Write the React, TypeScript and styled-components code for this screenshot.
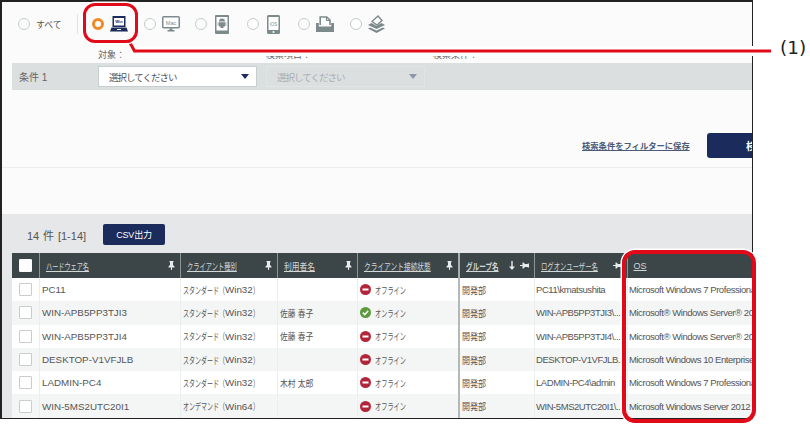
import React from 'react';
import styled, { createGlobalStyle } from 'styled-components';

const NAVY = '#1a2b5c';
const ICON_GREY = '#7d8a8c';
const RED = '#e00a18';
const COLUMNS = '27px 141px 97px 80px 101px 76px 93px 140px';
const FONT = `"Liberation Sans", "Noto Sans CJK JP", sans-serif`;

const GlobalStyle = createGlobalStyle`
  html, body {
    margin: 0;
    padding: 0;
    background: #fff;
    font-family: ${FONT};
  }
`;

const Page = styled.div`
  position: relative;
  width: 810px;
  height: 426px;
  overflow: hidden;
  background: #fff;
`;

const Frame = styled.div`
  width: 753px;
  height: 419px;
  box-sizing: border-box;
  border: 1px solid #222;
  border-top-width: 2px;
  border-left-width: 2px;
  overflow: hidden;
  display: flex;
  flex-direction: column;
  background: #e6e7e8;
`;

const SearchPanel = styled.section`
  height: 212px;
  flex: none;
  background: #fbfbfb;
  display: flex;
  flex-direction: column;
`;

const RadioRow = styled.div`
  height: 44px;
  flex: none;
  padding-left: 16px;
  display: flex;
  align-items: center;
`;

const AllOption = styled.label`
  display: flex;
  align-items: center;
  gap: 6px;
  font-size: 8.8px;
  color: #555;
  width: 59px;
`;

const Divider = styled.span`
  width: 1px;
  height: 20px;
  background: #e2e4e4;
  margin-right: 14px;
`;

const DeviceOption = styled.label`
  width: 51.6px;
  display: flex;
  align-items: center;
  gap: 6px;
`;

const IconSlot = styled.span`
  width: 18px;
  display: flex;
  justify-content: center;
`;

const Radio = styled.span<{ $checked?: boolean }>`
  width: 12px;
  height: 12px;
  flex: none;
  box-sizing: border-box;
  border-radius: 50%;
  background: ${p => (p.$checked ? '#fff' : '#fdfdfd')};
  border: ${p => (p.$checked ? '3.5px solid #f08a24' : '1px solid #c4cccc')};
`;

const LabelRow = styled.div`
  height: 17px;
  flex: none;
  padding: 2px 0 0 96px;
  box-sizing: border-box;
  display: grid;
  grid-template-columns: 168px 167px 1fr;
  font-size: 9px;
  color: #666;
`;

const ConditionBand = styled.div`
  height: 27px;
  flex: none;
  margin-left: 10px;
  padding-left: 7px;
  background: #dcdfe0;
  display: flex;
  align-items: center;
`;

const ConditionLabel = styled.span`
  width: 79px;
  font-size: 10px;
  color: #666;
`;

const Select = styled.div<{ $disabled?: boolean }>`
  width: 159px;
  height: 21px;
  box-sizing: border-box;
  margin-right: 9px;
  padding: 0 7px 0 10px;
  display: flex;
  align-items: center;
  justify-content: space-between;
  font-size: 9.5px;
  letter-spacing: -1px;
  background: ${p => (p.$disabled ? '#dcdfe0' : '#fff')};
  border: 1px solid ${p => (p.$disabled ? '#e2e5e5' : '#c6ced0')};
  color: ${p => (p.$disabled ? '#a9aeb0' : '#555')};
`;

const Caret = styled.span<{ $disabled?: boolean }>`
  width: 0;
  height: 0;
  border-left: 4px solid transparent;
  border-right: 4px solid transparent;
  border-top: 5px solid ${p => (p.$disabled ? '#8c96a8' : NAVY)};
`;

const ActionRow = styled.div`
  height: 78px;
  flex: none;
  box-sizing: border-box;
  padding: 43px 0 0 580px;
  display: flex;
  align-items: flex-start;
  border-bottom: 1px solid #eeeeee;
`;

const SaveLink = styled.a`
  flex: none;
  width: 125px;
  margin-top: 6px;
  font-size: 8.3px;
  font-weight: 700;
  color: #4a5a78;
  text-decoration: underline;
  white-space: nowrap;
`;

const SearchButton = styled.button`
  flex: none;
  width: 85px;
  height: 25px;
  padding: 0 0 0 39px;
  border: none;
  border-radius: 3px;
  background: ${NAVY};
  color: #fff;
  font-family: ${FONT};
  font-size: 10.5px;
  font-weight: 700;
  text-align: left;
`;

const ResultBar = styled.div`
  height: 39px;
  flex: none;
  box-sizing: border-box;
  padding: 2px 0 0 25px;
  display: flex;
  align-items: center;
  gap: 16px;
`;

const ResultCount = styled.span`
  width: 60px;
  font-size: 11px;
  color: #555;
  white-space: nowrap;
  word-spacing: 0.8px;
`;

const CsvButton = styled.button`
  width: 62px;
  height: 21px;
  padding: 0;
  border: none;
  border-radius: 2px;
  background: ${NAVY};
  color: #fff;
  font-family: ${FONT};
  font-size: 9px;
  letter-spacing: -0.2px;
`;

const Table = styled.div`
  margin-left: 10px;
  width: 760px;
`;

const HeaderRow = styled.div`
  display: grid;
  grid-template-columns: ${COLUMNS};
  height: 25px;
  background: #3c4548;
`;

const HeaderCell = styled.div<{ $pinEnd?: boolean }>`
  display: flex;
  align-items: center;
  justify-content: space-between;
  padding: 0 5px 0 5.5px;
  font-size: 9px;
  color: #d3d8d8;
  border-left: ${p => (p.$pinEnd ? '2px solid #a8adae' : '1px solid #8d9496')};
`;

// Reference type is a condensed face: squeeze the glyphs to the measured width
const Condensed = styled.span<{ $chars: number; $width: number }>`
  display: inline-block;
  flex: none;
  white-space: nowrap;
  font-size: 9.5px;
  width: ${p => p.$chars * 9.5}px;
  margin-right: ${p => p.$width - p.$chars * 9.5}px;
  transform: scaleX(${p => p.$width / (p.$chars * 9.5)});
  transform-origin: left center;
`;

const HeaderTitle = styled(Condensed)`
  text-decoration: underline;
`;

const HeaderIcons = styled.span`
  display: flex;
  align-items: center;
  gap: 5px;
`;

const CheckCell = styled.div`
  display: flex;
  align-items: center;
  justify-content: center;
`;

const Check = styled.span<{ $header?: boolean }>`
  width: 11px;
  height: 11px;
  border: 1px solid ${p => (p.$header ? '#fff' : '#c9cccc')};
  border-radius: 1px;
  background: #fff;
`;

const Row = styled.div<{ $shaded: boolean }>`
  display: grid;
  grid-template-columns: ${COLUMNS};
  height: 23.3px;
  background: ${p => (p.$shaded ? '#f4f5f5' : '#fff')};
`;

const Cell = styled.div<{ $pinEnd?: boolean }>`
  display: flex;
  align-items: center;
  gap: 4px;
  padding-left: 2px;
  overflow: hidden;
  white-space: nowrap;
  font-size: 9.8px;
  color: #555;
  border-left: ${p => (p.$pinEnd ? '2px solid #b4b8b9' : '1px solid #eceeee')};
`;

const ClientCell = styled(Cell)`
  gap: 0;
`;

const NarrowCell = styled(Cell)`
  padding-left: 1px;
  font-size: 9.5px;
  letter-spacing: -0.45px;
`;

const CalloutBox = styled.div`
  position: absolute;
  box-sizing: border-box;
  border: 3.5px solid ${RED};
  box-shadow: 0 0 0 1.5px #fff;
`;

const DeviceBox = styled(CalloutBox)`
  left: 83px;
  top: 3px;
  width: 55px;
  height: 40px;
  border-radius: 12px;
`;

const OsBox = styled(CalloutBox)`
  left: 622px;
  top: 250px;
  width: 134px;
  height: 173px;
  border-width: 4.5px;
  border-radius: 13px;
`;

const CalloutLine = styled.svg`
  position: absolute;
  left: 0;
  top: 0;
`;

const CalloutNumber = styled.span`
  position: absolute;
  left: 780px;
  top: 37px;
  font-family: "DejaVu Sans", sans-serif;
  font-size: 18.5px;
  color: #222;
`;

const LaptopIcon = () => (
  <svg width="18" height="16" viewBox="0 0 18 16">
    <path d="M2.500 0h13v11h-13z" fill={NAVY} />
    <path d="M4 2h10v7.500H4z" fill="#fff" />
    <text x="9" y="7" fontSize="4" fontFamily="Liberation Sans" fontWeight="700" textAnchor="middle" fill={NAVY}>Win</text>
    <path d="M1.500 11.500h15L18 15.500H0z" fill={NAVY} />
    <path d="M7 13h4v1H7z" fill="#fff" />
  </svg>
);

const MacIcon = () => (
  <svg width="18" height="16" viewBox="0 0 18 16">
    <rect x="0.750" y="0.750" width="16.500" height="11" rx="1" fill="#fff" stroke={ICON_GREY} strokeWidth="1.500" />
    <text x="9" y="8.500" fontSize="5.500" fontFamily="Liberation Sans" textAnchor="middle" fill={ICON_GREY}>Mac</text>
    <path d="M7.500 12.500h3V14h2v1.500h-7V14h2z" fill={ICON_GREY} />
  </svg>
);

const AndroidIcon = () => (
  <svg width="14" height="19" viewBox="0 0 14 19">
    <rect x="0" y="0" width="14" height="19" rx="1" fill={ICON_GREY} />
    <rect x="1.500" y="2" width="11" height="13.500" fill="#fff" />
    <path d="M4 6.500a3 3 0 0 1 6 0zM4 7.300h6v4.200H8.500V13h-3v-1.500H4z" fill={ICON_GREY} />
    <path d="M2.700 7.300h.8v3.500h-.8zM10.500 7.300h.8v3.500h-.8z" fill={ICON_GREY} />
  </svg>
);

const IosIcon = () => (
  <svg width="13" height="19" viewBox="0 0 13 19">
    <rect x="0" y="0" width="13" height="19" rx="1.500" fill={ICON_GREY} />
    <rect x="1.500" y="2" width="10" height="13" fill="#fff" />
    <text x="6.500" y="10.500" fontSize="4.500" fontFamily="Liberation Sans" textAnchor="middle" fill={ICON_GREY}>iOS</text>
    <circle cx="6.500" cy="17" r="1" fill="#fff" />
  </svg>
);

const TrayIcon = () => (
  <svg width="18" height="16" viewBox="0 0 18 16">
    <path d="M4.200 9V1h6.500L14 4.200V9" fill="#fff" stroke={ICON_GREY} strokeWidth="1.600" />
    <path d="M10.500 1v3.500H14" fill="none" stroke={ICON_GREY} strokeWidth="1.200" />
    <path d="M0 7h2.800v3.500h12.400V7H18v9H0z" fill={ICON_GREY} />
  </svg>
);

const StackIcon = () => (
  <svg width="17" height="18" viewBox="0 0 17 18">
    <path d="M4 6.500 10 1l4 4.500-5 4.500z" fill="#fff" stroke={ICON_GREY} strokeWidth="1.400" />
    <path d="M0 10l3.500-2 5 3 5-3L17 10l-8.500 4z" fill={ICON_GREY} />
    <path d="M0 13.500l2-1 6.500 3 6.500-3 2 1-8.500 4.500z" fill={ICON_GREY} />
  </svg>
);

const PinIcon = () => (
  <svg width="7" height="9" viewBox="0 0 7 9">
    <path d="M1.500 0h4v1l-.5.500V4L6.500 5.500V6.500H4V9H3V6.500H.5V5.500L2 4V1.500L1.500 1z" fill="#e8ebeb" />
  </svg>
);

const SidePinIcon = () => (
  <svg width="9" height="7" viewBox="0 0 9 7">
    <path d="M9 1.500v4H8l-.5-.5H5L3.500 6.500h-1V4H0V3h2.500V.5h1L5 2h2.500L8 1.500z" fill="#e8ebeb" />
  </svg>
);

const SortIcon = () => (
  <svg width="6" height="9" viewBox="0 0 6 9">
    <path d="M2.300 0h1.400v5.500H6L3 9 0 5.500h2.300z" fill="#e8ebeb" />
  </svg>
);

const OfflineIcon = () => (
  <svg width="11" height="11" viewBox="0 0 11 11" style={{ flex: 'none' }}>
    <circle cx="5.500" cy="5.500" r="5.500" fill="#b3263a" />
    <rect x="2.500" y="4.500" width="6" height="2" fill="#fff" />
  </svg>
);

const OnlineIcon = () => (
  <svg width="11" height="11" viewBox="0 0 11 11" style={{ flex: 'none' }}>
    <circle cx="5.500" cy="5.500" r="5.500" fill="#5c9a3c" />
    <path d="M2.800 5.600l2 2 3.400-3.800" fill="none" stroke="#fff" strokeWidth="1.500" />
  </svg>
);

const rows = [
  { name: 'PC11', client: 'スタンダード', build: 'Win32', user: '', online: false, logon: 'PC11\\kmatsushita', os: 'Microsoft Windows 7 Professional' },
  { name: 'WIN-APB5PP3TJI3', client: 'スタンダード', build: 'Win32', user: '佐藤 春子', online: true, logon: 'WIN-APB5PP3TJI3\\...', os: 'Microsoft® Windows Server® 2008' },
  { name: 'WIN-APB5PP3TJI4', client: 'スタンダード', build: 'Win32', user: '佐藤 春子', online: false, logon: 'WIN-APB5PP3TJI4\\...', os: 'Microsoft® Windows Server® 2008' },
  { name: 'DESKTOP-V1VFJLB', client: 'スタンダード', build: 'Win32', user: '', online: false, logon: 'DESKTOP-V1VFJLB...', os: 'Microsoft Windows 10 Enterprise' },
  { name: 'LADMIN-PC4', client: 'スタンダード', build: 'Win32', user: '木村 太郎', online: false, logon: 'LADMIN-PC4\\admin', os: 'Microsoft Windows 7 Professional' },
  { name: 'WIN-5MS2UTC20I1', client: 'オンデマンド', build: 'Win64', user: '', online: false, logon: 'WIN-5MS2UTC20I1\\...', os: 'Microsoft Windows Server 2012 Standard' },
];

const devices = [
  { id: 'win', icon: <LaptopIcon />, checked: true },
  { id: 'mac', icon: <MacIcon /> },
  { id: 'android', icon: <AndroidIcon /> },
  { id: 'ios', icon: <IosIcon /> },
  { id: 'tray', icon: <TrayIcon /> },
  { id: 'stack', icon: <StackIcon /> },
];

export default function App() {
  return (
    <Page>
      <GlobalStyle />
      <Frame>
        <SearchPanel>
          <RadioRow>
            <AllOption><Radio />すべて</AllOption>
            <Divider />
            {devices.map(d => (
              <DeviceOption key={d.id}>
                <Radio $checked={d.checked} />
                <IconSlot>{d.icon}</IconSlot>
              </DeviceOption>
            ))}
          </RadioRow>
          <LabelRow>
            <span>対象：</span>
            <span>検索項目：</span>
            <span>検索条件：</span>
          </LabelRow>
          <ConditionBand>
            <ConditionLabel>条件 1</ConditionLabel>
            <Select>選択してください<Caret /></Select>
            <Select $disabled>選択してください<Caret $disabled /></Select>
          </ConditionBand>
          <ActionRow>
            <SaveLink>検索条件をフィルターに保存</SaveLink>
            <SearchButton>検索</SearchButton>
          </ActionRow>
        </SearchPanel>
        <ResultBar>
          <ResultCount>14 件 [1-14]</ResultCount>
          <CsvButton>CSV出力</CsvButton>
        </ResultBar>
        <Table>
          <HeaderRow>
            <CheckCell><Check $header /></CheckCell>
            <HeaderCell><HeaderTitle $chars={7} $width={43}>ハードウェア名</HeaderTitle><PinIcon /></HeaderCell>
            <HeaderCell><HeaderTitle $chars={8} $width={50}>クライアント種別</HeaderTitle><PinIcon /></HeaderCell>
            <HeaderCell><HeaderTitle $chars={4} $width={31}>利用者名</HeaderTitle><PinIcon /></HeaderCell>
            <HeaderCell><HeaderTitle $chars={10} $width={67}>クライアント接続状態</HeaderTitle><PinIcon /></HeaderCell>
            <HeaderCell $pinEnd>
              <HeaderTitle $chars={5} $width={33}><b>グループ名</b></HeaderTitle>
              <HeaderIcons><SortIcon /><SidePinIcon /></HeaderIcons>
            </HeaderCell>
            <HeaderCell><HeaderTitle $chars={9} $width={57}>ログオンユーザー名</HeaderTitle><SidePinIcon /></HeaderCell>
            <HeaderCell><u>OS</u></HeaderCell>
          </HeaderRow>
          {rows.map((r, i) => (
            <Row key={r.name} $shaded={i % 2 === 1}>
              <CheckCell><Check /></CheckCell>
              <Cell>{r.name}</Cell>
              <ClientCell>
                <Condensed $chars={7} $width={42}>{r.client}（</Condensed>
                {r.build}
                <Condensed $chars={1} $width={6}>）</Condensed>
              </ClientCell>
              <Cell>{r.user && <Condensed $chars={4.5} $width={35}>{r.user}</Condensed>}</Cell>
              <Cell>
                {r.online ? <OnlineIcon /> : <OfflineIcon />}
                <Condensed $chars={5} $width={31}>{r.online ? 'オンライン' : 'オフライン'}</Condensed>
              </Cell>
              <Cell $pinEnd><Condensed $chars={3} $width={24}>開発部</Condensed></Cell>
              <NarrowCell>{r.logon}</NarrowCell>
              <NarrowCell>{r.os}</NarrowCell>
            </Row>
          ))}
        </Table>
      </Frame>

      <CalloutLine width="810" height="426" viewBox="0 0 810 426">
        <path d="M136 51 H771" fill="none" stroke="#fff" strokeWidth="10" />
        <path d="M129 41 L134.500 51 H771" fill="none" stroke={RED} strokeWidth="3" />
      </CalloutLine>
      <DeviceBox />
      <OsBox />
      <CalloutNumber>(1)</CalloutNumber>
    </Page>
  );
}
